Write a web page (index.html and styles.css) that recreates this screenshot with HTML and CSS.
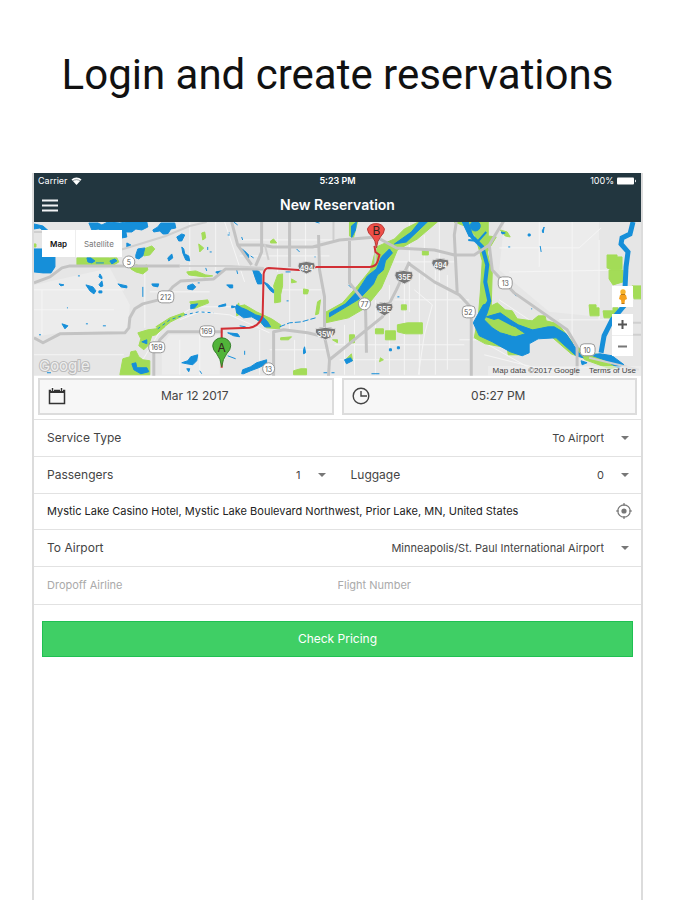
FILE: index.html
```html
<!DOCTYPE html>
<html lang="en">
<head>
<meta charset="utf-8">
<meta name="viewport" content="width=device-width, initial-scale=1">
<title>New Reservation</title>
<link rel="stylesheet" href="styles.css">
</head>
<body>
<h1 class="headline">Login and create reservations</h1>
<main class="device">
  <header class="topbar">
    <div class="status">
      <span class="status-left">Carrier
        <svg width="11" height="8" viewBox="0 0 11 8"><path d="M.5 2.5a7.5 7.5 0 0 1 10 0L5.500 8z" fill="#fff"/><path d="M1.500 4.200a6 6 0 0 1 8 0" fill="none" stroke="#22363f" stroke-width=".5"/></svg>
      </span>
      <span class="status-time">5:23 PM</span>
      <span class="status-right">100%
        <svg width="20" height="8" viewBox="0 0 20 8"><rect y=".5" width="17" height="7" rx="1" fill="#fff"/><path d="M18 2.500q2 1.500 0 3z" fill="#fff"/></svg>
      </span>
    </div>
    <div class="navbar">
      <button class="menu" type="button" aria-label="Menu"><svg width="16" height="13" viewBox="0 0 16 13"><path d="M0 1.500h16M0 6.500h16M0 11.500h16" stroke="#f1f3f5" stroke-width="2"/></svg></button>
      <h2 class="title">New Reservation</h2>
    </div>
  </header>

  <section class="map">
    <svg class="map-art" viewBox="34 222 608 154" preserveAspectRatio="xMidYMid slice">
      <rect x="34" y="222" width="608" height="154" fill="#e6e6e6"/>
      <path d="M34 285L110 268 130 305 128 331 60 333 34 337zM170 335h50v40h-58v-30zM505 222h95v95l-50 -5 -50-42z" fill="#ececec"/>
      <!-- local streets -->
      <g fill="none" stroke="#f5f5f5" stroke-width="1">
        <path d="M34 290h90M42 290v45M110 222v45M145 270v58M190 222v55M216 222v50M34 310h80M150 292h60M225 222l20 60M242 240h94M278 222v50M306 222v150M240 256h90M270 290h52M290 270v60M270 350h60M345 325v50M355 320v55M376 300v75M390 285v90M405 280v95M420 270v105M436 270v105M335 345h130M340 360h130M395 300h75M410 222v90M425 235v45M440 222v60M448 275v95M395 262h60M500 248h80l22-20M573 222v125M510 272l120-2M540 222v45M460 340h20l50 28h60M485 355l80 20M500 300l30 20v20M600 240v80M560 320h60M415 290l18 15 -8 30 -6 40M34 355h90M180 340v35M200 335v40M260 330v45M295 340v35M180 320l20-8 30 3 40 18M134 375l30-50 30-18h40"/>
      </g>
      <!-- parks -->
      <g fill="#a3dc57" stroke="#a3dc57" stroke-width="1" stroke-linejoin="round">
        <path d="M77 258h40l2 4-5 3H77zM131 266l6-1 4 2 6-2 1 5-5 4-7-2-5-3zM144 249l8-3 3 3-5 6-6 1zM202 233l3-1 1 6-3 2zM199 244l5 4-4 4zM187 272l9-1 10 4 7 1-8 1-8-1-8-1zM34 244h2v3h-2z"/>
        <path d="M138 333l10-3 8-1 6-4 3 2-9 8-4 1-3 9-5 5-5-4 2-7zM120 375l3-16 7-2 1-5 5-1 3 6 4 3 7 1v14zM156 327l14-9 14-5 1 2-14 7-9 7zM190 302l18-2 1 3-15 6zM237 307l2-4 2 11-4 2z"/>
        <path d="M271 241l3-2 3 4h-6zM278 275l5-1 0 12-2 9 0 7-6 1 0-12-1-5zM292 279l5 3-5 1zM304 289l5 1-1 4h-4zM318 302l3-2-2 14-3 1zM281 338l11-1-3 3-8 0zM294 371l7-2h6v6h-13zM350 335h5v8h-5zM333 340h5v3zM376 329h8v5h-8zM386 331h10v9h-10zM398 325l10-2h15v11h-17l-8-2zM402 305h5v5h-5zM381 358l3 2-4 2zM346 360l6-6 1 7zM423 250h6v5h-6z"/>
        <path d="M350 222h8l-4 16-4-2zM405 229l14-7h19l-20 17-20 11-7 17-9 21-16 20-17 10-23 5 -1-10 18-10 15-17 13-16 6-23 18-8zM236 307l9-2 12 7 15 7 9 6-1 4-13-1-14-12-14-2z"/>
        <path d="M455 222h34v14l8 1-9 15 5 21-1 33 6-3 8 7 7 1 5 8 15 2 6-5h7l1 5 12 3 14 18 4 14-5-2-30-26-18 8-4 10 1 9h-12l-1-7-22-4-11-6 4-21 2-24 2-32-7-25-8-9zM501 230l7 2 3 5-5-1zM608 255h10v2h5v12l-7 2-8-3zM610 270h14v12l-10 3-4-6zM633 286h9v13h-7zM590 305h7v3h3v8h-9zM604 311h10v-3h5v10h-14zM577 346l7 6 22 4 14 11-9 2-25-9-8-7z"/>
      </g>
      <!-- lakes and rivers -->
      <g fill="#168fd9" stroke="#168fd9" stroke-width="1" stroke-linejoin="round">
        <path d="M34 249h10l3 3 8 3v12l-4 6-8 0-9-1zM34 224l9 2 9 8-4 1-8-7-6 1zM89 223h9l4 2 6-3 12 1 6-1h21l1 5-6 3-6-1-4 3-6 0 1 5-5 1-3-4-7 4-4-3-6-1-3-5-7 1zM153 230l5-3 3-4 14 0 1 5-5 1-3 5-5 0-3-3-6 1zM136 255l2-6 7-1-2 8-4 3-3-1zM127 243l4 2-4 3zM177 237l5-3 3 1-3 6-3 0zM168 258l4-4 1 4-4 3zM182 247l2 2 1 5 4 2 1 5-4-1-3-7zM87 258l4 0 4 3-3 2-4-1zM110 261l5-2 2 2-5 3zM96 263h8M78 276h2M100 274l2 3 0 2-3-2zM59 284l5 1-3 1zM86 285l7 2 3 4-2 3-4-3zM99 285l3-4 1 5-2 1zM99 291l3 0 0 2h-3zM118 284l9 2 0 2-6-1zM152 284l7 0-1 3-5-1zM143 287v10M188 286l5-2 3 3-3 3-5-1zM198 283h2M216 272l6-1-3 4zM227 285l6 0 0 3-3 0zM62 324l6 2-3 3zM39 335h2M67 308h1M103 326h3M86 324h2M191 305l7-1-3 4-4 1zM219 306l7-2 0 2-7 1zM232 306l4 1-4 1zM228 333l10 1 2 3-6-1z"/>
        <path d="M182 363l6-2 3-4 7-2-1 6-4 4-6-1zM187 369h3l-1 3zM200 371l2 3M132 364l4-1 1 5h10l2 4-8 2-7-4zM142 342l5-2v4zM47 373h4M243 370l8-3 6-4 10-3 0 4-8 4-8 3-7 3-2 0zM245 351v4M304 350l1-3 1 6-2 1zM345 360l6-2 2 3-6 3zM390 349h2v2h-2zM398 347h2v2h-2zM228 356l8 3M234 222l4 3M228 235h2M210 252h2M241 248l4 3 4 4 0 3-4-3zM253 270l6 1 3 4 0 9-4 0-2-5zM264 282l4 2 3 3 3 3 0 3-3-2zM237 270l1 4M251 256l3 2M297 249l3 3M315 257h1M349 285l3 3M398 297h2M316 222l4 1M324 373h4M332 373h3M372 374h8M242 237l1 3M287 301h2M286 272h5M208 247v3M229 233h1M240 326l6 1M206 268l1 3"/>
        <path d="M352 226l5-4-1 8-4 8zM420 222h8l-21 20-12 2 17-12zM382 257l8-8 3 4-7 8-2 9-6 5-4 9-14 15-30 18v-4l16-9 13-14 9-14 9-7zM236 308l1-3 5 3 5 2 9 5 7 2 5 5 3 5-6 0-4-5-9-5-8 1-7-5z"/>
        <path d="M463 222h6l3 9-2 6zM543 231l2-4-1 6zM529 234h2v2h-2zM541 246l1 6M509 247h2M532 309h1M515 294l2 2M502 232l4 1-3 1z"/>
        <circle cx="476" cy="226" r="5"/>
        <path d="M484 305l7-2-3 10-3 7 8 8 8 5 15 4 10-3 3-3 20-4h6l12 7 12 18 5 6-7-2-20-18-18 1-9 5v9l-7 3-12-4-18-10-13-6-6-13zM501 313l10 7 8 5 14 5-5 5-12-8-17-6-12-4zM601 354l12 2 12 9-6 3-14-8-14-5zM582 361l6 2-5 2z"/>
      </g>
      <g fill="none" stroke="#168fd9">
        <path d="M466 224l7 13 10 10 5 18-2 17 4 19-5 9" stroke-width="4"/>
        <path d="M469 240l10 1M478 242l9-10" stroke-width="2"/>
        <path d="M634 222l-3 12-8 4-1 6 7 8-2 15-1 21-1 18-12 14-8 16-3 17" stroke-width="5"/>
        <path d="M158 329l12-9 15-5 14-3 15 1" stroke-width="1" stroke-dasharray="3 3"/>
        <path d="M280 327l10-4 12-1 14-4" stroke-width="1" stroke-dasharray="6 2"/>
      </g>
      <path d="M489 322l10-3 17 9 7 5-10 3-16-6z" fill="#a3dc57"/>
      <!-- highways -->
      <g fill="none" stroke="#c3c3c3" stroke-width="3" stroke-linejoin="round">
        <path d="M34 338l9 5 17-9 65-1 4-5 1-10 5-9 8-5 20-5 10-12 8-6 33-2 12-10h38M34 283l16-6 12-9 8-2h110M154 376v-23l6-13 8-8h55M274 376v-44l10-2 24 3 17 4M319 235l1 35 5 27v40l5 23-1 16M330 360l53-43 14-27 13-28M350 240v43l16 20 1 50M238 245l25 0 10 2h40l27-7 37-3 20 11 38 2 20 5h20l15-10 15-25M457 222l-2 13 3 60M410 264l25 18 25 13 12 13v68M490 245l3 25 22 23 53 37 10 17v29M262 222v30l-6 14M290 222v45M232 222l6 23 14 20"/>
      </g>
      <g fill="none" stroke="#cfcfcf" stroke-width="2">
        <path d="M120 250l20-6 26-8 24-10 17-4M180 266h50l34 2M334 222v18M376 237v28M625 323h17M625 335h17M590 358l50 12M265 244l4 16M34 232h20"/>
      </g>
      <path d="M222 368v-39l28-1q10-2 13-12l1-42q1-6 5-6l30 2 18-3h53q6 0 8-5l2-7-4-3-1-6" fill="none" stroke="#d22f35" stroke-width="2"/>
      <!-- shields -->
      <g class="shield">
        <rect x="158" y="291" width="16" height="12" rx="4"/><rect x="200" y="326" width="15" height="11" rx="4"/><rect x="149" y="342" width="16" height="11" rx="4"/><circle cx="129" cy="262" r="6"/><circle cx="269" cy="369" r="6"/><circle cx="365" cy="304" r="6"/><rect x="499" y="277" width="14" height="12" rx="4"/><rect x="463" y="306" width="13" height="12" rx="4"/><rect x="581" y="344" width="15" height="12" rx="4"/>
      </g>
      <g class="shield-label">
        <text x="166" y="300">212</text><text x="207" y="334">169</text><text x="157" y="350">169</text><text x="129" y="265">5</text><text x="269" y="372">13</text><text x="365" y="307">77</text><text x="506" y="286">13</text><text x="469" y="315">52</text><text x="588" y="353">10</text>
      </g>
      <g fill="#777" stroke="#ddd" stroke-width="1">
        <path d="M299 263q8-3 16 0 3 7-8 11-11-4-8-11zM433 260q8-3 16 0 3 7-8 11-11-4-8-11zM396 272q8-3 17 0 3 8-8 12-12-4-9-12zM377 304q8-3 16 0 3 7-8 12-11-5-8-12zM316 329q10-3 20 0 2 7-10 11-12-4-10-11z"/>
      </g>
      <g class="interstate-label">
        <text x="307" y="271">494</text><text x="441" y="268">494</text><text x="405" y="280">35E</text><text x="385" y="312">35E</text><text x="326" y="337">35W</text>
      </g>
      <!-- route pins -->
      <g stroke-width="1">
        <path d="M222 367q-1-8-5-13-4-4-4-8a9 8 0 0 1 18 0q0 4-4 8-4 5-5 13z" fill="#51b439" stroke="#35802a"/>
        <path d="M377 248q-1-8-4-11-5-4-5-8a9 8 0 0 1 17 0q0 4-4 8-3 3-4 11z" fill="#ef4e48" stroke="#b83a36"/>
      </g>
      <text class="pin-label" x="222" y="352">A</text>
      <text class="pin-label" x="377" y="235">B</text>
      <text class="google" x="39" y="371">Google</text>
    </svg>
    <div class="map-type">
      <button type="button" class="map-type-on">Map</button>
      <button type="button">Satellite</button>
    </div>
    <div class="map-tools">
      <button class="tool" type="button" aria-label="Street View"><svg width="10" height="15" viewBox="0 0 10 15"><path d="M2 6q3-2 6 0l1 4-2 1-.5 3.500h-3L3 11l-2-1z" fill="#f5a11c"/><circle cx="5" cy="3" r="2.700" fill="#f7b42c"/><path d="M3 5.500h4M3.500 14.500h3" stroke="#b97816"/></svg></button>
      <div class="zoom">
        <button class="tool" type="button" aria-label="Zoom in"><svg width="9" height="9" viewBox="0 0 9 9"><path d="M0 4.500h9M4.500 0v9" stroke="#555" stroke-width="2"/></svg></button>
        <button class="tool" type="button" aria-label="Zoom out"><svg width="9" height="9" viewBox="0 0 9 9"><path d="M0 4.500h9" stroke="#777" stroke-width="2"/></svg></button>
      </div>
    </div>
    <div class="credits"><span>Map data ©2017 Google</span><a href="#terms">Terms of Use</a></div>
  </section>

  <form class="form">
    <div class="when">
      <button class="pick" type="button">
        <svg width="18" height="18" viewBox="0 0 18 18" fill="none" stroke="#333"><path d="M1.500 3.500h15v13h-15z" stroke-width="1.500"/><path d="M1 4.500h16" stroke-width="3"/><path d="M4.500 0v4M13.500 0v4" stroke="#fff" stroke-width="3"/><path d="M4.500 1v3M13.500 1v3" stroke-width="1.500"/></svg>
        <span>Mar 12 2017</span>
      </button>
      <button class="pick" type="button">
        <svg width="18" height="18" viewBox="0 0 18 18" fill="none" stroke="#444"><circle cx="9" cy="9" r="7.800" stroke-width="1.400"/><path d="M9 4v5h6" stroke-width="1.400"/></svg>
        <span>05:27 PM</span>
      </button>
    </div>

    <div class="row">
      <div class="field">
        <label for="service">Service Type</label>
        <select id="service"><option>To Airport</option></select>
        <svg class="caret" width="8" height="4" viewBox="0 0 8 4"><path d="M0 0h8L4 4z"/></svg>
      </div>
    </div>
    <div class="row split">
      <div class="field">
        <label for="passengers">Passengers</label>
        <select id="passengers"><option>1</option></select>
        <svg class="caret" width="8" height="4" viewBox="0 0 8 4"><path d="M0 0h8L4 4z"/></svg>
      </div>
      <div class="field">
        <label for="luggage">Luggage</label>
        <select id="luggage"><option>0</option></select>
        <svg class="caret" width="8" height="4" viewBox="0 0 8 4"><path d="M0 0h8L4 4z"/></svg>
      </div>
    </div>
    <div class="row address">
      <input type="text" aria-label="Pickup address" value="Mystic Lake Casino Hotel, Mystic Lake Boulevard Northwest, Prior Lake, MN, United States">
      <button class="locate" type="button" aria-label="Use current location"><svg width="16" height="16" viewBox="0 0 16 16" fill="none" stroke="#777"><circle cx="8" cy="8" r="6.200" stroke-width="1.200"/><path d="M8 0v3M8 13v3M0 8h3M13 8h3" stroke-width="1.200"/><circle cx="8" cy="8" r="2.600" fill="#777" stroke="none"/></svg></button>
    </div>
    <div class="row">
      <div class="field">
        <label for="airport">To Airport</label>
        <select id="airport"><option>Minneapolis/St. Paul International Airport</option></select>
        <svg class="caret" width="8" height="4" viewBox="0 0 8 4"><path d="M0 0h8L4 4z"/></svg>
      </div>
    </div>
    <div class="row split flight">
      <input class="airline" type="text" aria-label="Dropoff Airline" placeholder="Dropoff Airline">
      <input type="text" aria-label="Flight Number" placeholder="Flight Number">
    </div>
    <button class="submit" type="button">Check Pricing</button>
  </form>
</main>
</body>
</html>
```

FILE: styles.css
```css
* {
  box-sizing: border-box;
}

body {
  margin: 0;
  min-height: 100vh;
  display: flex;
  flex-direction: column;
  background: #fff;
  color: #444;
  font: 12px/16px Inter, "Liberation Sans", Arial, sans-serif;
}

button,
input,
select {
  margin: 0;
  padding: 0;
  border: 0;
  border-radius: 0;
  background: none;
  color: inherit;
  font: inherit;
  appearance: none;
}

svg {
  display: block;
  flex: none;
}

.headline {
  margin: 0;
  padding: 50px 0 73px;
  color: #111;
  font: 400 42px/50px Roboto, sans-serif;
  text-align: center;
}

.device {
  flex: 1;
  margin: 0 32px;
  border: solid #dcdcdc;
  border-width: 0 2px;
}

.topbar {
  padding-bottom: 1px;
  background: #22363f;
  color: #fff;
}

.status {
  display: grid;
  grid-template-columns: 1fr auto 1fr;
  padding: 0 4px;
  font-size: 9px;
}

.status-left,
.status-right {
  display: flex;
  align-items: center;
  gap: 3px;
}

.status-right {
  justify-content: flex-end;
}

.status-time {
  font-weight: 600;
}

.navbar {
  display: grid;
  grid-template-columns: 32px 1fr 32px;
  align-items: center;
  height: 32px;
}

.menu {
  padding: 4px 8px;
}

.title {
  margin: 0;
  font-size: 14px;
  font-weight: 600;
  text-align: center;
}

.map {
  position: relative;
}

.map-art {
  width: 100%;
}

.shield {
  fill: #fff;
  stroke: #999;
}

.shield-label,
.interstate-label {
  fill: #555;
  font-size: 7px;
  text-anchor: middle;
}

.interstate-label {
  fill: #fff;
  font-weight: 600;
}

.pin-label {
  fill: #33261f;
  font-size: 12px;
  text-anchor: middle;
}

.google {
  fill: #eee;
  stroke: #bbb;
  stroke-width: 2px;
  paint-order: stroke;
  font-size: 15px;
}

.map-type {
  position: absolute;
  top: 8px;
  left: 8px;
  display: flex;
  background: #fff;
  color: #777;
  font-size: 8px;
}

.map-type button {
  height: 27px;
  padding: 0 8px;
}

.map-type .map-type-on {
  border-right: 1px solid #eee;
  color: #111;
  font-weight: 600;
}

.map-tools {
  position: absolute;
  top: 64px;
  right: 8px;
  display: grid;
  gap: 7px;
}

.tool {
  display: grid;
  place-items: center;
  width: 21px;
  height: 21px;
  background: #fff;
}

.zoom .tool + .tool {
  border-top: 1px solid #eee;
}

.credits {
  position: absolute;
  right: 0;
  bottom: 0;
  display: flex;
  gap: 9px;
  padding: 0 5px;
  background: rgb(240 240 240 / 60%);
  color: #444;
  font: 8px/10px "Liberation Sans", Arial, sans-serif;
}

.credits a {
  color: inherit;
  text-decoration: none;
}

.when {
  display: grid;
  grid-template-columns: 1fr 1fr;
  gap: 8px;
  padding: 2px 4px 4px;
  border-bottom: 1px solid #e2e2e2;
}

.pick {
  display: flex;
  align-items: center;
  height: 37px;
  padding: 0 8px;
  border: 2px solid #dcdcdc;
  background: #f7f7f7;
}

.pick span {
  flex: 1;
}

.row {
  height: 37px;
  border-bottom: 1px solid #e2e2e2;
}

.split {
  display: grid;
  grid-template-columns: 1fr 1fr;
}

.field {
  display: flex;
  align-items: center;
  height: 100%;
  padding: 0 12px 0 13px;
}

.field select {
  flex: 1;
  min-width: 0;
  margin-right: 17px;
  font-size: 11px;
  text-align-last: right;
}

.caret {
  fill: #777;
}

.address {
  display: flex;
  align-items: center;
  height: 36px;
  padding: 0 9px 0 13px;
  color: #222;
  font-size: 11px;
}

.address input {
  flex: 1;
  min-width: 0;
}

.flight {
  height: 38px;
  font-size: 11px;
}

.airline {
  padding-left: 13px;
}

input::placeholder {
  color: #aaa;
  opacity: 1;
}

.submit {
  display: block;
  width: calc(100% - 16px);
  height: 36px;
  margin: 16px 8px;
  border: 1px solid #1fc052;
  background: #3fcf65;
  color: #fff;
}
```
